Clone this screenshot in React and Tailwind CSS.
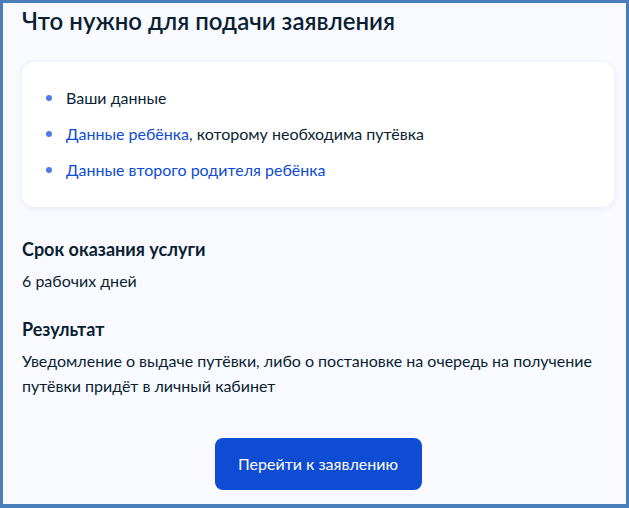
import React from 'react';

const items = [
  { link: 'Ваши данные', rest: '', plain: true },
  { link: 'Данные ребёнка', rest: ', которому необходима путёвка' },
  { link: 'Данные второго родителя ребёнка', rest: '' },
];

export default function App() {
  return (
    <div
      className="w-[629px] h-[508px] border-[3px] border-b-4 border-[#4a7ebb] bg-[#f8faff] overflow-hidden text-[#0b1f33]"
      style={{ fontFamily: 'Lato, "Noto Sans", sans-serif' }}
    >
      <div className="pl-[19px] pr-[12px] pt-[1px]">
        <h1 className="text-[24px] leading-[34px] font-semibold">Что нужно для подачи заявления</h1>

        <div className="mt-[24px] bg-white rounded-xl shadow-[0_1px_6px_rgba(120,140,180,0.15)] pl-[24px] pr-6 pt-[24px] pb-[25px] flex flex-col gap-[12px]">
          {items.map((it, i) => (
            <div key={i} className="flex items-center gap-[14px] text-[16px] leading-[24px]">
              <span className="w-[6px] h-[6px] rounded-full bg-[#4b7be5] shrink-0" />
              <span>
                <span className={it.plain ? '' : 'text-[#0d4cd3]'}>{it.link}</span>
                {it.rest}
              </span>
            </div>
          ))}
        </div>

        <h2 className="mt-[30px] text-[18px] leading-[24px] font-bold">Срок оказания услуги</h2>
        <p className="mt-[8px] text-[16px] leading-[24px]">6 рабочих дней</p>

        <h2 className="mt-[24px] text-[18px] leading-[24px] font-bold">Результат</h2>
        <p className="mt-[7px] text-[16px] leading-[25px]">
          Уведомление о выдаче путёвки, либо о постановке на очередь на получение
          <br />
          путёвки придёт в личный кабинет
        </p>

        <div className="mt-[40px] flex justify-center">
          <button className="w-[207px] h-[52px] rounded-lg bg-[#0d4cd3] text-white text-[16px]">
            Перейти к заявлению
          </button>
        </div>
      </div>
    </div>
  );
}
